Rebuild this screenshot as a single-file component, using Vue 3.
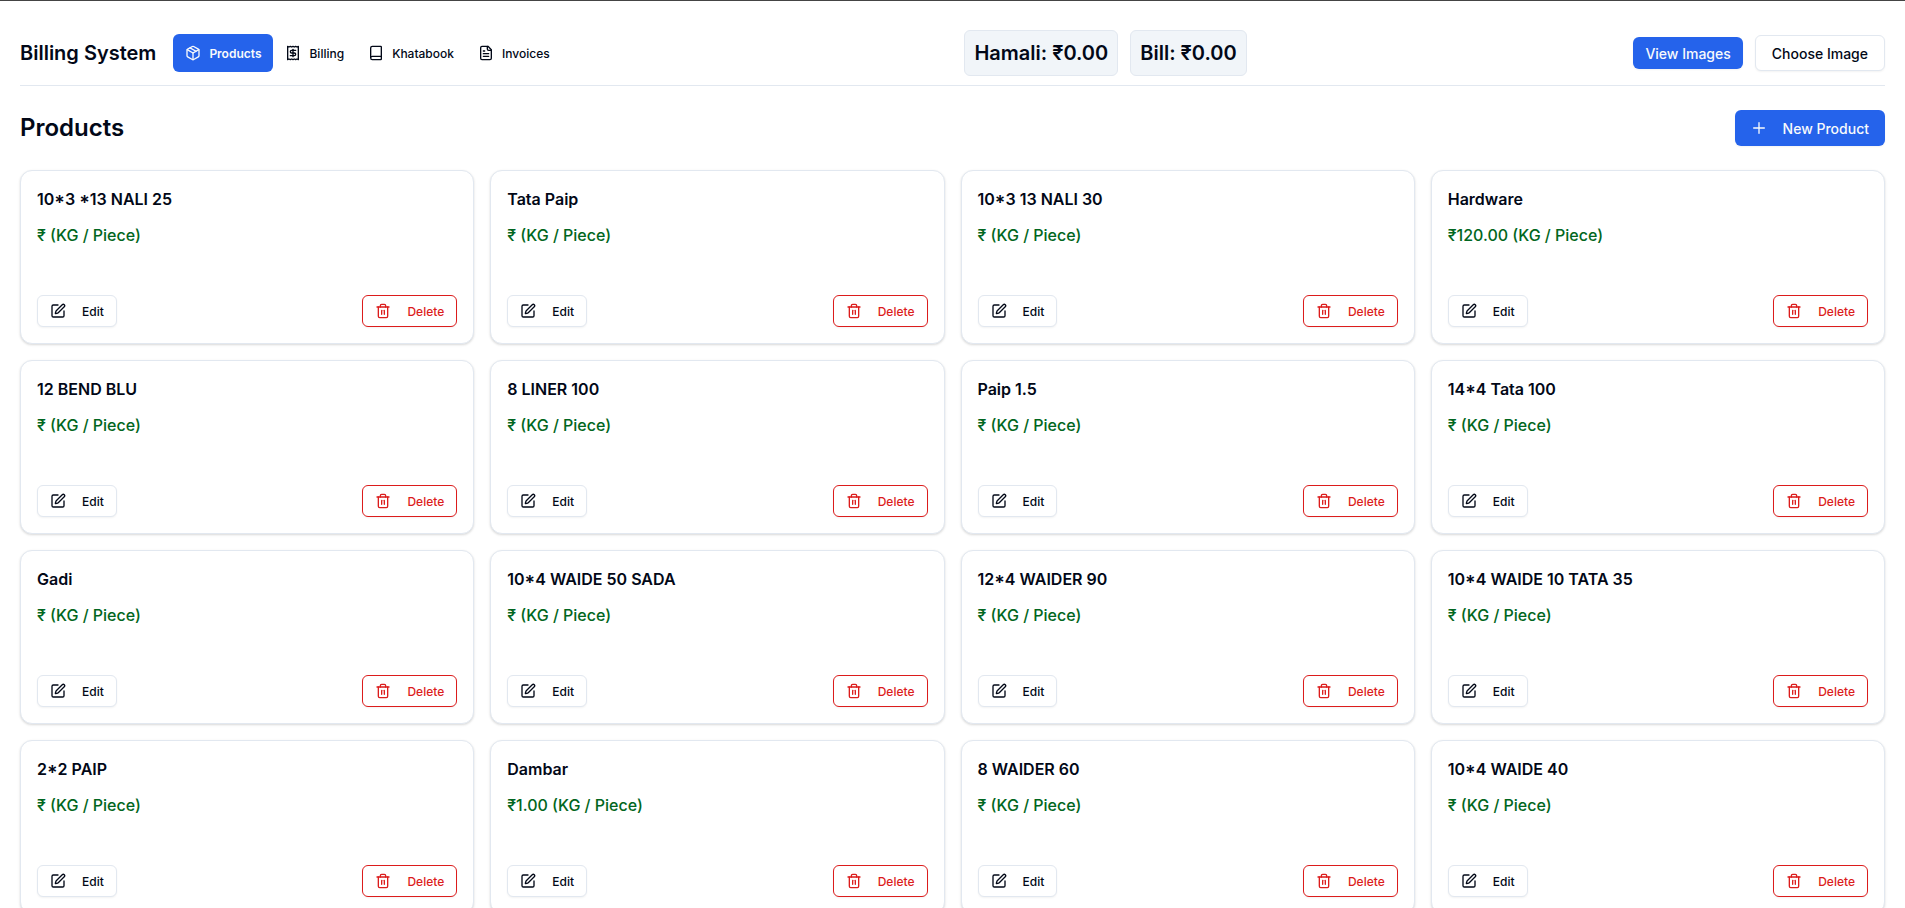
<script setup>
const price = '₹ (KG / Piece)'
const products = [
  { name: '10*3 *13 NALI 25', price },
  { name: 'Tata Paip', price },
  { name: '10*3 13 NALI 30', price },
  { name: 'Hardware', price: '₹120.00 (KG / Piece)' },
  { name: '12 BEND BLU', price },
  { name: '8 LINER 100', price },
  { name: 'Paip 1.5', price },
  { name: '14*4 Tata 100', price },
  { name: 'Gadi', price },
  { name: '10*4 WAIDE 50 SADA', price },
  { name: '12*4 WAIDER 90', price },
  { name: '10*4 WAIDE 10 TATA 35', price },
  { name: '2*2 PAIP', price },
  { name: 'Dambar', price: '₹1.00 (KG / Piece)' },
  { name: '8 WAIDER 60', price },
  { name: '10*4 WAIDE 40', price },
]

const icons = {
  box: [
    'M11 21.73a2 2 0 0 0 2 0l7-4A2 2 0 0 0 21 16V8a2 2 0 0 0-1-1.73l-7-4a2 2 0 0 0-2 0l-7 4A2 2 0 0 0 3 8v8a2 2 0 0 0 1 1.73z',
    'M12 22V12',
    'M3.3 7 12 12l8.7-5',
    'm7.5 4.27 9 5.15',
  ],
  receipt: [
    'M4 2v20l2-1 2 1 2-1 2 1 2-1 2 1 2-1 2 1V2l-2 1-2-1-2 1-2-1-2 1-2-1-2 1Z',
    'M16 8h-6a2 2 0 1 0 0 4h4a2 2 0 1 1 0 4H8',
    'M12 17.5v-11',
  ],
  book: [
    'M4 19.5v-15A2.5 2.5 0 0 1 6.5 2H19a1 1 0 0 1 1 1v18a1 1 0 0 1-1 1H6.5a1 1 0 0 1 0-5H20',
  ],
  file: [
    'M15 2H6a2 2 0 0 0-2 2v16a2 2 0 0 0 2 2h12a2 2 0 0 0 2-2V7Z',
    'M14 2v4a2 2 0 0 0 2 2h4',
    'M10 9H8',
    'M16 13H8',
    'M16 17H8',
  ],
}

const links = [
  { label: 'Products', icon: 'box', active: true },
  { label: 'Billing', icon: 'receipt' },
  { label: 'Khatabook', icon: 'book' },
  { label: 'Invoices', icon: 'file' },
]
</script>

<template>
  <div class="page">
    <header class="topbar">
      <div class="left">
        <a class="brand" href="#">Billing System</a>
        <nav class="nav">
          <a v-for="l in links" :key="l.label" href="#" class="nav-link" :class="{ active: l.active }">
            <svg class="icon" viewBox="0 0 24 24" aria-hidden="true">
              <path v-for="d in icons[l.icon]" :key="d" :d="d" />
            </svg>
            <span>{{ l.label }}</span>
          </a>
        </nav>
      </div>
      <div class="totals">
        <div class="total">Hamali: ₹0.00</div>
        <div class="total">Bill: ₹0.00</div>
      </div>
      <div class="right">
        <button type="button" class="btn primary small">View Images</button>
        <button type="button" class="btn outline">Choose Image</button>
      </div>
    </header>

    <main>
      <div class="heading">
        <h1>Products</h1>
        <button type="button" class="btn primary">
          <svg class="icon" viewBox="0 0 24 24" aria-hidden="true"><path d="M4 12h16" /><path d="M12 4v16" /></svg>
          <span>New Product</span>
        </button>
      </div>
      <div class="grid">
        <article v-for="p in products" :key="p.name" class="card">
          <h2>{{ p.name }}</h2>
          <p class="price">{{ p.price }}</p>
          <div class="actions">
            <button type="button" class="btn outline compact">
              <svg class="icon" viewBox="0 0 24 24" aria-hidden="true">
                <path d="M12 3H5a2 2 0 0 0-2 2v14a2 2 0 0 0 2 2h14a2 2 0 0 0 2-2v-7" />
                <path d="M18.375 2.625a1 1 0 0 1 3 3l-9.013 9.014a2 2 0 0 1-.853.505l-2.873.84a.5.5 0 0 1-.62-.62l.84-2.873a2 2 0 0 1 .506-.852z" />
              </svg>
              <span>Edit</span>
            </button>
            <button type="button" class="btn outline compact danger">
              <svg class="icon" viewBox="0 0 24 24" aria-hidden="true">
                <path d="M3 6h18" />
                <path d="M19 6v14c0 1-1 2-2 2H7c-1 0-2-1-2-2V6" />
                <path d="M8 6V4c0-1 1-2 2-2h4c1 0 2 1 2 2v2" />
                <path d="M10 11v6" />
                <path d="M14 11v6" />
              </svg>
              <span>Delete</span>
            </button>
          </div>
        </article>
      </div>
    </main>
  </div>
</template>

<style>
body {
  background: #fff;
  overflow: hidden;
}
</style>

<style scoped>
* {
  box-sizing: border-box;
}
.page {
  border-top: 1px solid #444;
  padding: 20px 20px 0;
  font-family: Inter, "Liberation Sans", sans-serif;
  color: #020817;
}
.topbar {
  display: flex;
  justify-content: space-between;
  align-items: center;
  height: 65px;
  border-bottom: 1px solid #e2e8f0;
}
.left,
.nav,
.totals,
.right {
  display: flex;
  align-items: center;
}
.left {
  gap: 17px;
  padding-right: 16px;
}
.brand {
  font-size: 20px;
  line-height: 28px;
  font-weight: 600;
  color: inherit;
  text-decoration: none;
}
.nav-link {
  display: flex;
  align-items: center;
  gap: 8px;
  height: 38px;
  padding: 0 12px;
  border-radius: 6px;
  font-size: 12px;
  font-weight: 500;
  color: inherit;
  text-decoration: none;
}
.nav-link.active {
  background: #2563eb;
  font-weight: 600;
  color: #f8fafc;
}
.totals,
.right {
  gap: 12px;
}
.total {
  padding: 8px 9px;
  border: 1px solid #e2e8f0;
  border-radius: 6px;
  background: #f1f5f9;
  font-size: 20px;
  line-height: 28px;
  font-weight: 600;
}
.icon {
  width: 16px;
  height: 16px;
  flex: none;
  fill: none;
  stroke: currentColor;
  stroke-width: 2;
  stroke-linecap: round;
  stroke-linejoin: round;
}
.btn {
  display: inline-flex;
  align-items: center;
  gap: 16px;
  height: 36px;
  padding: 0 16px;
  border: 0;
  border-radius: 6px;
  font-family: inherit;
  font-size: 14px;
  font-weight: 500;
  white-space: nowrap;
  cursor: pointer;
  box-shadow: 0 1px 2px rgba(0, 0, 0, 0.05);
}
.primary {
  background: #2563eb;
  color: #f8fafc;
}
.outline {
  border: 1px solid #e2e8f0;
  background: #fff;
  color: #020817;
}
.small {
  height: 32px;
  padding: 0 12px;
}
.compact {
  height: 32px;
  padding: 0 12px;
  font-size: 12px;
}
.danger {
  border-color: #dc1c1c;
  color: #dc1c1c;
}
.heading {
  display: flex;
  align-items: center;
  justify-content: space-between;
  margin: 24px 0;
}
h1 {
  margin: 0;
  font-size: 24px;
  line-height: 32px;
  font-weight: 600;
}
.grid {
  display: grid;
  grid-template-columns: repeat(4, minmax(0, 1fr));
  gap: 16px;
}
.card {
  padding: 16px;
  border: 1px solid #e2e8f0;
  border-radius: 12px;
  background: #fff;
  box-shadow: 0 1px 3px rgba(0, 0, 0, 0.1), 0 1px 2px rgba(0, 0, 0, 0.06);
}
h2,
.price {
  margin: 0;
  font-size: 16px;
  line-height: 24px;
}
h2 {
  font-weight: 600;
}
.price {
  margin-top: 12px;
  font-weight: 500;
  color: #016620;
}
.actions {
  display: flex;
  justify-content: space-between;
  margin-top: 48px;
}
</style>
